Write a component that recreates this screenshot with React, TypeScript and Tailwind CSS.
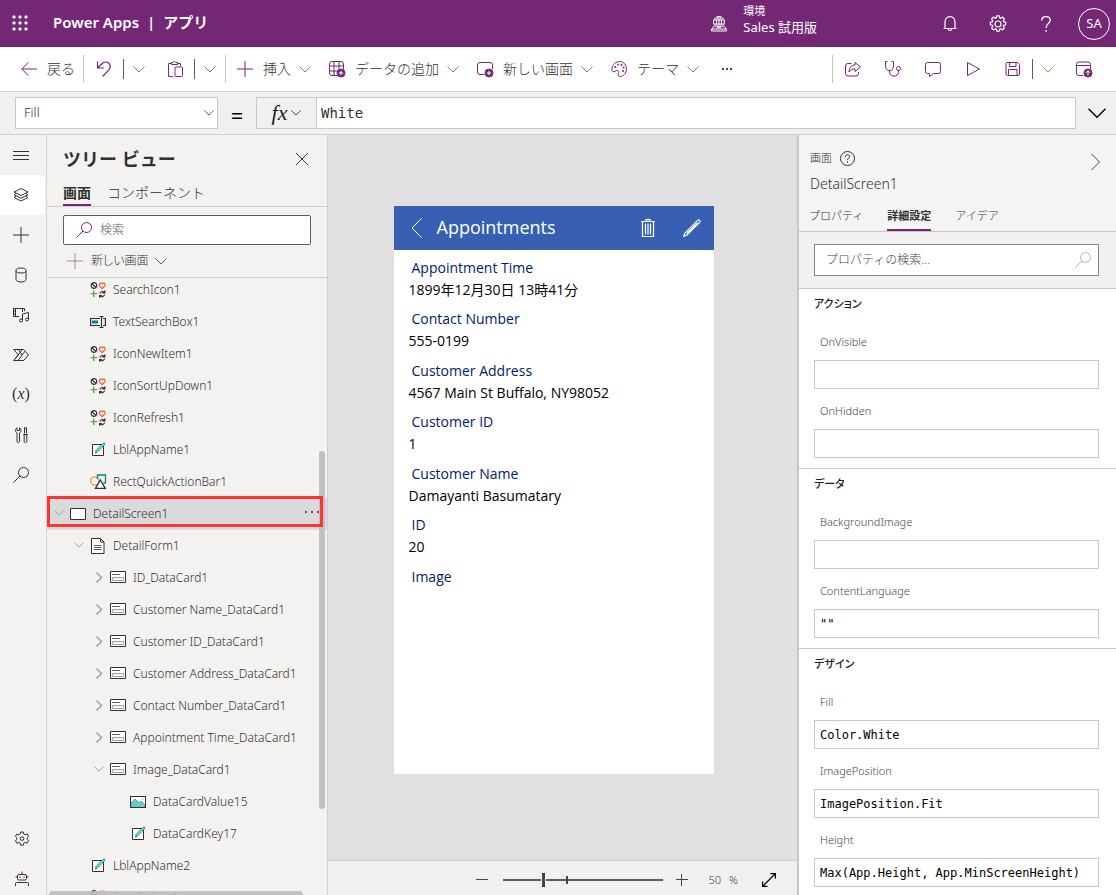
import type { ReactNode } from "react";

type IconProps = { children: ReactNode; size?: string; stroke?: number; box?: string };

function Svg({ children, size = "size-4", stroke = 1, box = "0 0 16 16" }: IconProps) {
  return (
    <svg
      viewBox={box}
      className={`${size} shrink-0 overflow-visible`}
      fill="none"
      stroke="currentColor"
      strokeWidth={stroke}
      aria-hidden="true"
    >
      {children}
    </svg>
  );
}

const ChevronDown = ({ size = "w-3 h-[7px]" }: { size?: string }) => (
  <Svg size={size} box="0 0 12 7"><path d="M.5.5 6 6 11.5.5" /></Svg>
);
const ChevronRight = () => (
  <Svg size="w-[6px] h-[11px]" box="0 0 6 11" stroke={1.2}><path d="M.5.5 5.5 5.5.5 10.5" /></Svg>
);
const Plus = () => <Svg><path d="M8 0v16M0 8h16" /></Svg>;
const Search = () => <Svg><circle cx="10.5" cy="5.5" r="5" /><path d="M7 9 .5 15.5" /></Svg>;
const Back = () => <Svg><path d="M.8 8H16M7.5 1.3.8 8l6.7 6.7" /></Svg>;
const Undo = () => (
  <Svg stroke={1.2}><path d="M1.500.5v6.500H8M1.500 7l5-4.700c1.800-1.600 4.600-1.600 6.300 0 1.900 1.800 1.900 4.700.1 6.500L6.500 15.500" /></Svg>
);
const Paste = () => (
  <Svg>
    <path d="M4.500 2.500H1.500v13H6M10.500 2.500h3V5M4.500 1.500h1.700c.2-1.300 2.400-1.300 2.600 0h1.700v2h-6z" />
    <rect x="8" y="6" width="7.500" height="9.500" rx="1" />
  </Svg>
);
const TableAdd = () => (
  <Svg>
    <path d="M8 14.500H3a2.500 2.500 0 0 1-2.500-2.500V3A2.500 2.500 0 0 1 3 .5h9A2.500 2.500 0 0 1 14.500 3v5M.5 5h14M.5 10h8M5 .5v14M10 .5V8" />
    <circle cx="12" cy="12" r="4" fill="currentColor" />
    <path d="M12 9.800v4.400M9.800 12h4.400" stroke="white" />
  </Svg>
);
const ScreenAdd = () => (
  <Svg>
    <path d="M7.500 13.500H3A2.500 2.500 0 0 1 .5 11V4A2.500 2.500 0 0 1 3 1.500h10A2.500 2.500 0 0 1 15.500 4v4" />
    <circle cx="12" cy="12" r="4" fill="currentColor" />
    <path d="M12 9.800v4.400M9.800 12h4.400" stroke="white" />
  </Svg>
);
const Palette = () => (
  <Svg>
    <path d="M1 7.500C1.500 3 5 .4 9 .6c4 .3 6.700 3.700 6.500 7.400-.2 4.300-3.300 7.500-6.200 7.500-2.200 0-2.500-1.800-1.800-3.200.6-1.400.2-2.600-1-2.800C4.300 9.300 3.600 11.500 2 10.700.8 10 .8 8.900 1 7.500z" />
    <g fill="currentColor" stroke="none">
      <circle cx="4.300" cy="6" r="1" /><circle cx="7" cy="3.600" r="1" /><circle cx="10.500" cy="3.900" r="1" />
      <circle cx="12.600" cy="6.600" r="1" /><circle cx="12" cy="10" r="1" />
    </g>
  </Svg>
);
const Share = () => (
  <Svg>
    <path d="M6.500 2.500H3A2.500 2.500 0 0 0 .5 5v7.500A2.500 2.500 0 0 0 3 15h8a2.500 2.500 0 0 0 2.500-2.500V11" />
    <path d="M10 1.500 15.500 6 10 10.500V8c-3 0-4.500 1-6 3 0-4 2-7 6-7z" strokeLinejoin="round" />
  </Svg>
);
const Checker = () => (
  <Svg>
    <path d="M2.500.5h-2v4.500c0 3 1.800 4.500 4 4.500S8.500 8 8.500 5V.5h-2M4.500 9.500v1.800c0 5.200 9 5.200 9 0V9.500" />
    <circle cx="13.500" cy="7.500" r="2" />
  </Svg>
);
const Comment = () => (
  <Svg><path d="M2.500 1.500h11a2 2 0 0 1 2 2v7a2 2 0 0 1-2 2H8.500l-4 3v-3h-2a2 2 0 0 1-2-2v-7a2 2 0 0 1 2-2z" strokeLinejoin="round" /></Svg>
);
const Play = () => <Svg><path d="M2.500 1.500 14.500 8l-12 6.500z" strokeLinejoin="round" /></Svg>;
const Save = () => (
  <Svg>
    <path d="M2 1.500h10.500l2 2v9.500a1.500 1.500 0 0 1-1.500 1.500H2.500A1.500 1.500 0 0 1 1 13V2.500a1 1 0 0 1 1-1z" />
    <path d="M4.500 1.500v4h6.500v-4M3.500 14.500v-6h8.500v6" />
  </Svg>
);
const Publish = () => (
  <Svg>
    <path d="M7.500 14.500H3A2.500 2.500 0 0 1 .5 12V3.500A2.500 2.500 0 0 1 3 1h9a2.500 2.500 0 0 1 2.500 2.500V8M.5 4.500h14" />
    <circle cx="12" cy="12" r="4" fill="currentColor" />
    <path d="M12 14.500V10M10 11.700l2-2 2 2" stroke="white" />
  </Svg>
);
const GEAR =
  "M6.700 1h2.600l.4 2 1.500.8 1.900-.8 1.500 2.300-1.400 1.500v1.600l1.400 1.500-1.500 2.300-1.900-.8-1.500.8-.4 2H6.700l-.4-2-1.500-.8-1.900.8-1.500-2.300 1.400-1.500V6.800L1.400 5.300 2.900 3l1.900.8L6.300 3z";
const Gear = () => (
  <Svg><path d={GEAR} strokeLinejoin="round" /><circle cx="8" cy="7.600" r="1.800" /></Svg>
);
const GearRound = () => (
  <Svg size="size-[18px]" box="0 0 18 18" stroke={1.2}>
    <circle cx="9" cy="9" r="3" />
    <path
      strokeLinejoin="round"
      d="m7.700.8 2.600 0 .4 2.100 1 .4 1.800-1.200 1.900 1.900-1.200 1.800.4 1 2.100.4v2.600l-2.100.4-.4 1 1.200 1.800-1.900 1.900-1.800-1.200-1 .4-.4 2.100H7.700l-.4-2.100-1-.4-1.800 1.200L2.600 13l1.200-1.800-.4-1-2.100-.4V7.200l2.100-.4.4-1L2.600 4l1.900-1.900 1.800 1.200 1-.4z"
    />
  </Svg>
);
const Bell = () => (
  <Svg stroke={1.2}><path d="M1.500 12.500h13M3 12.500V6C3 3 5 .6 8 .6S13 3 13 6v6.500M6.200 13c.3 2 3.300 2 3.600 0" /></Svg>
);
const EnvGlobe = () => (
  <Svg>
    <path d="M3.500 10.500h-1l-2 3.500v1h15v-1l-2-3.500h-1M.5 13h15" />
    <circle cx="8" cy="6" r="5.500" />
    <ellipse cx="8" cy="6" rx="2.500" ry="5.500" />
    <path d="M3 4h10M3 8h10M8 .5v11" />
  </Svg>
);
const Menu = () => <Svg><path d="M0 4.500h16M0 8.500h16M0 12.500h16" /></Svg>;
const Layers = () => (
  <Svg>
    <path d="m8 1.500 7 3.500-7 3.500L1 5z" />
    <path d="M3 6.500 1 7.700l7 3.500 7-3.500-2-1.200M3 9.300l-2 1.200L8 14l7-3.500-2-1.200" />
  </Svg>
);
const Cylinder = () => (
  <Svg><ellipse cx="8" cy="3.500" rx="5" ry="2.500" /><path d="M3 3.500v9c0 3.300 10 3.300 10 0v-9" /></Svg>
);
const Media = () => (
  <Svg>
    <path d="M6 9.500H.5v-8h11V4M2.500 1.500v8M9.500 1.500V5M.5 4h2M.5 7h2M9.500 13.500V7l6-1.500v7" />
    <circle cx="8" cy="13.500" r="1.500" /><circle cx="14" cy="12.500" r="1.500" />
  </Svg>
);
const Flow = () => (
  <Svg><path d="M.7 2.500h10L15.500 8l-4.800 5.500H.7L5.500 8zM.7 13.500 9 3M5 13.500 11.800 4.500M5.500 2.500 9 8" /></Svg>
);
const Tools = () => (
  <Svg>
    <path d="M4 .8C2 2 2 5 4 6v8.500c0 1.300 2.500 1.300 2.500 0V6c2-1 2-4 0-5.200V3.500H4zM11.500.5v6M13.500.5v6M10.300 7.500h4.400M11.200 7.500v7c0 1.300 2.600 1.300 2.600 0v-7" />
    <path d="M11.500 1h2" />
  </Svg>
);
const Robot = () => (
  <Svg>
    <path d="M8 3V.5M5 3.500h6a1.500 1.500 0 0 1 1.500 1.500v2.500A1.500 1.500 0 0 1 11 9H5a1.500 1.500 0 0 1-1.500-1.500V5A1.500 1.500 0 0 1 5 3.500zM1.500 15v-2.500a1 1 0 0 1 1-1h11a1 1 0 0 1 1 1V15M1.500 6h2M12.500 6h2" />
    <path d="M6 5.500v1.500M10 5.500v1.500" stroke="#742774" />
  </Svg>
);

const IconsGroup = () => (
  <Svg size="w-4 h-[17px]" box="0 0 16 18" stroke={1.2}>
    <g stroke="#323130">
      <circle cx="3.700" cy="3.700" r="3" /><path d="m1.600 1.600 4.200 4.200" />
      <path d="M10 12.300a3 3 0 0 1 5-1.200M15.300 9v2.500h-2.500M15 13.400a3 3 0 0 1-5 1.300M9.700 16.800v-2.500h2.500" />
    </g>
    <path d="M12.500 7 9.700 4.100C8.400 2.500 10.600-.1 12.500 1.900c1.900-2 4.100.6 2.800 2.200z" stroke="#e8552f" />
    <path d="M3.500 9v7M0 12.500h7" stroke="#2f9a3c" />
  </Svg>
);
const TextBoxIcon = () => (
  <Svg stroke={1.2}>
    <path d="M10 4.500H.6v7H10M13 4.500h2.400v7H13" stroke="#323130" />
    <path d="M2 6.500h6v3H2z" fill="#038387" stroke="none" />
    <path d="M9.500 2.500h4M9.500 13.500h4M11.500 2.500v11" stroke="#323130" />
  </Svg>
);
const LabelIcon = () => (
  <Svg>
    <path d="M2.500 2.500h11v11h-11z" stroke="#323130" fill="white" />
    <path d="m5.500 11 .8-2.800 7-7c.9-.8 2.200.5 1.400 1.400l-7 7z" stroke="#038387" fill="#b4e3e5" />
  </Svg>
);
const ShapesIcon = () => (
  <Svg stroke={1.3}>
    <circle cx="4.800" cy="7" r="4.200" stroke="#e8a33d" />
    <path d="M7.500 5V1h8v8h-2" stroke="#038387" />
    <path d="M10.300 6 5.500 14.400h9.800z" stroke="#323130" fill="white" />
  </Svg>
);
const ScreenIcon = () => (
  <Svg><path d="M.5 2.500h15v11H.5z" fill="white" stroke="#323130" /></Svg>
);
const FormIcon = () => (
  <Svg>
    <path d="M1.500.5h9l3.500 3.500v11.500H1.500z" fill="white" stroke="#323130" />
    <path d="M10.500.5V4H14" stroke="#323130" />
    <path d="M4 7.500h7.500M4 9.500h7.500M4 11.500h7.500" stroke="#605e5c" />
  </Svg>
);
const CardIcon = () => (
  <Svg>
    <path d="M.5 1.500h15v11H.5z" fill="white" stroke="#323130" />
    <path d="M2 4.500h8" stroke="#605e5c" />
    <path d="M2.500 7.500h11v3h-11z" stroke="#a19f9d" />
  </Svg>
);
const ImageIcon = () => (
  <Svg>
    <path d="M.5 2.500h15v11H.5z" fill="white" />
    <path d="M1 9l4-4 4 4 2-2 4 4v2.500H1z" fill="#69cdd0" stroke="#038387" strokeWidth=".6" />
    <path d="M.5 2.500h15v11H.5z" stroke="#323130" />
    <circle cx="12.500" cy="5.200" r=".7" fill="#e8a33d" stroke="none" />
  </Svg>
);

const jp = "font-['Noto_Sans','Noto_Sans_CJK_JP',sans-serif]";

function Divider({ tall = false, className = "" }: { tall?: boolean; className?: string }) {
  return <span className={`${tall ? "h-7 bg-[#c8c6c4]" : "h-5 bg-[#605e5c]"} w-px shrink-0 ${className}`} />;
}

function MenuButton({ icon, label, className = "" }: { icon: ReactNode; label: string; className?: string }) {
  return (
    <button type="button" className={`flex items-center whitespace-nowrap ${className}`}>
      <span className="text-[#742774]">{icon}</span>
      <span className="mr-2 ml-2.5 pb-0.5">{label}</span>
      <span className="text-[#69879a]"><ChevronDown /></span>
    </button>
  );
}

function IconButton({ label, children, className = "" }: { label: string; children: ReactNode; className?: string }) {
  return (
    <button type="button" aria-label={label} className={`flex shrink-0 items-center justify-center ${className}`}>
      {children}
    </button>
  );
}

function Header() {
  return (
    <header className="flex h-[47px] shrink-0 items-center bg-[#742774] font-normal text-white">
      <IconButton label="アプリ起動ツール" className="ml-3 pb-px">
        <svg viewBox="0 0 16 16" className="size-4" fill="currentColor" aria-hidden="true">
          {[0, 6, 12].map((y) => [0, 6, 12].map((x) => <rect key={`${x}-${y}`} x={x + 0.5} y={y + 0.5} width="3" height="3" rx="1" />))}
        </svg>
      </IconButton>
      <h1 className="ml-[25px] flex gap-2 pb-0.5 text-[15px] font-semibold whitespace-nowrap">
        <span>Power Apps</span><span>|</span><span>アプリ</span>
      </h1>
      <div className="mr-[125px] ml-auto flex items-center gap-4">
        <EnvGlobe />
        <div className="pb-2.5 whitespace-nowrap">
          <div className="text-[11px] leading-4">環境</div>
          <div className="text-[13px] leading-4">Sales 試用版</div>
        </div>
      </div>
      <IconButton label="通知" className="w-4"><Bell /></IconButton>
      <IconButton label="設定" className="ml-[31px]"><GearRound /></IconButton>
      <IconButton label="ヘルプ" className="ml-[30px] w-[18px]">
        <Svg size="w-[10px] h-4" box="0 0 10 16" stroke={1.3}>
          <path d="M.7 4.500C.7 2 2.500.7 5 .7s4.300 1.500 4.300 3.600C9.300 7.500 5 7.800 5 12M5 14v1.800" />
        </Svg>
      </IconButton>
      <button type="button" className="mr-[6px] ml-[23px] size-8 rounded-full border border-white text-[13px]">SA</button>
    </header>
  );
}

function CommandBar() {
  return (
    <div className="flex h-[45px] shrink-0 items-center border-b border-[#d2d0ce] bg-white text-[14px] text-[#323130]">
      <button type="button" className="ml-[21px] flex items-center gap-2.5 whitespace-nowrap">
        <span className="text-[#742774]"><Back /></span>
        <span className="pb-0.5">戻る</span>
      </button>
      <Divider tall className="ml-2" />
      <IconButton label="元に戻す" className="ml-3 text-[#742774]"><Undo /></IconButton>
      <Divider className="ml-[11px]" />
      <IconButton label="元に戻すオプション" className="ml-[9px] text-[#69879a]"><ChevronDown /></IconButton>
      <IconButton label="貼り付け" className="ml-[22px] text-[#742774]"><Paste /></IconButton>
      <Divider className="ml-[11px]" />
      <IconButton label="貼り付けオプション" className="ml-[9px] text-[#69879a]"><ChevronDown /></IconButton>
      <Divider tall className="ml-[9px]" />
      <MenuButton className="ml-[11px]" icon={<Plus />} label="挿入" />
      <MenuButton className="ml-[18px]" icon={<TableAdd />} label="データの追加" />
      <MenuButton className="ml-[18px]" icon={<ScreenAdd />} label="新しい画面" />
      <MenuButton className="ml-[18px]" icon={<Palette />} label="テーマ" />
      <IconButton label="その他" className="ml-[22px] text-[#742774]">
        <Svg size="w-3 h-1" box="0 0 12 4"><path d="M1 2h2M5 2h2M9 2h2" strokeWidth="2" /></Svg>
      </IconButton>
      <div className="mr-6 ml-auto flex items-center text-[#742774]">
        <Divider tall />
        <IconButton label="共有" className="ml-3"><Share /></IconButton>
        <IconButton label="アプリ チェッカー" className="ml-6"><Checker /></IconButton>
        <IconButton label="コメント" className="ml-6"><Comment /></IconButton>
        <IconButton label="プレビュー" className="ml-6"><Play /></IconButton>
        <IconButton label="保存" className="ml-6"><Save /></IconButton>
        <Divider className="ml-[11px]" />
        <IconButton label="保存オプション" className="ml-[9px] text-[#a5894f]"><ChevronDown /></IconButton>
        <IconButton label="公開" className="ml-[22px]"><Publish /></IconButton>
      </div>
    </div>
  );
}

function FormulaBar() {
  return (
    <div className="flex h-[43px] shrink-0 items-center border-b border-[#d2d0ce] bg-[#f0f0f0]">
      <div className="relative ml-[15px] w-[203px] shrink-0">
        <select aria-label="プロパティ" className="h-8 w-full appearance-none border border-[#c8c8c8] bg-white px-2 text-[13px] text-[#323130]">
          <option>Fill</option>
        </select>
        <span className="pointer-events-none absolute inset-y-0 right-1 flex items-center text-[#323130]">
          <ChevronDown size="w-2.5 h-1.5" />
        </span>
      </div>
      <span className="w-[38px] shrink-0 pt-1 text-center text-[22px] leading-5 font-normal text-black">=</span>
      <button type="button" aria-label="数式" className="flex h-8 w-[60px] shrink-0 items-center justify-center gap-1 border border-r-0 border-[#c8c8c8] text-[#201f1e]">
        <span className="font-['Liberation_Serif',serif] text-[22px] leading-5 font-normal italic">fx</span>
        <ChevronDown size="w-2.5 h-1.5" />
      </button>
      <input
        aria-label="数式バー"
        defaultValue="White"
        className="h-8 min-w-0 flex-1 border border-[#c8c8c8] bg-white px-1 font-['DejaVu_Sans_Mono','Liberation_Mono',monospace] text-[14px] text-[#323130]"
      />
      <IconButton label="数式バーを展開" className="w-10 pl-px text-black">
        <Svg size="w-[18px] h-2.5" box="0 0 18 10" stroke={1.4}><path d="m.5.7 8.500 8.500L17.500.7" /></Svg>
      </IconButton>
    </div>
  );
}

const railItems: { label: string; icon: ReactNode; active?: boolean }[] = [
  { label: "メニュー", icon: <Menu /> },
  { label: "ツリー ビュー", icon: <Layers />, active: true },
  { label: "挿入", icon: <Plus /> },
  { label: "データ", icon: <Cylinder /> },
  { label: "メディア", icon: <Media /> },
  { label: "Power Automate", icon: <Flow /> },
  { label: "変数", icon: <span className="pb-0.5 font-['Liberation_Serif',serif] text-[16px] leading-4">(<i>x</i>)</span> },
  { label: "詳細ツール", icon: <Tools /> },
  { label: "検索", icon: <Search /> },
];

function Rail() {
  return (
    <nav className="flex w-[47px] shrink-0 flex-col border-r border-[#d8d6d4] bg-[#f3f2f1] text-[#323130]">
      {railItems.map((item) => (
        <IconButton key={item.label} label={item.label} className={`mr-px h-10 pr-[3px] ${item.active ? "rounded-r-sm bg-white" : ""}`}>
          {item.icon}
        </IconButton>
      ))}
      <div className="mt-auto flex flex-col gap-1">
        <IconButton label="設定" className="h-10 pr-0.5"><Gear /></IconButton>
        <IconButton label="仮想エージェント" className="h-8 pr-0.5"><Robot /></IconButton>
      </div>
    </nav>
  );
}

type Node = { level: 0 | 1 | 2 | 3; icon: ReactNode; name: string; open?: boolean; selected?: boolean };

const nodes: Node[] = [
  { level: 1, icon: <IconsGroup />, name: "SearchIcon1" },
  { level: 1, icon: <TextBoxIcon />, name: "TextSearchBox1" },
  { level: 1, icon: <IconsGroup />, name: "IconNewItem1" },
  { level: 1, icon: <IconsGroup />, name: "IconSortUpDown1" },
  { level: 1, icon: <IconsGroup />, name: "IconRefresh1" },
  { level: 1, icon: <LabelIcon />, name: "LblAppName1" },
  { level: 1, icon: <ShapesIcon />, name: "RectQuickActionBar1" },
  { level: 0, icon: <ScreenIcon />, name: "DetailScreen1", open: true, selected: true },
  { level: 1, icon: <FormIcon />, name: "DetailForm1", open: true },
  { level: 2, icon: <CardIcon />, name: "ID_DataCard1", open: false },
  { level: 2, icon: <CardIcon />, name: "Customer Name_DataCard1", open: false },
  { level: 2, icon: <CardIcon />, name: "Customer ID_DataCard1", open: false },
  { level: 2, icon: <CardIcon />, name: "Customer Address_DataCard1", open: false },
  { level: 2, icon: <CardIcon />, name: "Contact Number_DataCard1", open: false },
  { level: 2, icon: <CardIcon />, name: "Appointment Time_DataCard1", open: false },
  { level: 2, icon: <CardIcon />, name: "Image_DataCard1", open: true },
  { level: 3, icon: <ImageIcon />, name: "DataCardValue15" },
  { level: 3, icon: <LabelIcon />, name: "DataCardKey17" },
  { level: 1, icon: <LabelIcon />, name: "LblAppName2" },
  { level: 1, icon: <IconsGroup />, name: "IconDelete1" },
];

const indent = ["pl-1", "pl-6", "pl-11", "pl-16"];

function TreeRow({ node }: { node: Node }) {
  return (
    <li className={`relative flex h-8 items-center ${indent[node.level]} ${node.selected ? "bg-[#dadada]" : ""}`}>
      <span className="flex w-[19px] shrink-0 justify-center pr-[3px] text-[#979593]">
        {node.open !== undefined && (
          <IconButton label={node.open ? "折りたたむ" : "展開"} className="pb-0.5">
            {node.open ? <ChevronDown size="w-2.5 h-1.5" /> : <ChevronRight />}
          </IconButton>
        )}
      </span>
      {node.icon}
      <span className="ml-[7px] whitespace-nowrap">{node.name}</span>
      {node.selected && (
        <>
          <IconButton label="その他の操作" className="mr-[7px] ml-auto pb-1 text-[#323130]">
            <Svg size="w-4 h-1" box="0 0 16 4"><path d="M1 2h2M7 2h2M13 2h2" strokeWidth="1.500" /></Svg>
          </IconButton>
          <span className="pointer-events-none absolute -top-0.5 right-1 bottom-[3px] left-0 z-10 border-3 border-[#fc3433]" />
        </>
      )}
    </li>
  );
}

function TreeView() {
  return (
    <aside className="flex w-[281px] shrink-0 flex-col border-r border-[#d2d0ce] bg-[#f3f2f1] text-[#323130]">
      <div className="flex h-12 shrink-0 items-center justify-between pr-[19px] pl-4">
        <h2 className="text-[18px] font-semibold">ツリー ビュー</h2>
        <IconButton label="閉じる">
          <Svg size="size-3" box="0 0 12 12"><path d="m0 0 12 12M12 0 0 12" /></Svg>
        </IconButton>
      </div>
      <div role="tablist" className="flex h-6 shrink-0 gap-4 border-b border-[#d2d0ce] pl-4 text-[14px] leading-5">
        <button type="button" role="tab" aria-selected="true" className="border-b-2 border-[#742774] pb-0.5 font-semibold">画面</button>
        <button type="button" role="tab" aria-selected="false" className="border-b-2 border-transparent pb-0.5">コンポーネント</button>
      </div>
      <div className="mx-4 mt-2 flex h-[30px] shrink-0 items-center gap-2 rounded-xs border border-[#605e5c] bg-white pl-3">
        <span className="text-[#742774]"><Search /></span>
        <input aria-label="ツリーの検索" placeholder="検索" className="min-w-0 flex-1 text-[12px] placeholder:text-[#605e5c] focus:outline-none" />
      </div>
      <button type="button" className="flex h-[33px] shrink-0 items-center border-b border-[#d2d0ce] pl-5 text-[12px]">
        <span className="text-[#b07cb0]"><Plus /></span>
        <span className="mr-[7px] ml-2 [font-feature-settings:'palt']">新しい画面</span>
        <span className="text-[#605e5c]"><ChevronDown /></span>
      </button>
      <div className="relative min-h-0 flex-1 overflow-hidden">
        <ul className="-mt-1 text-[12px] text-[#323130]">
          {nodes.map((node) => <TreeRow key={node.name} node={node} />)}
        </ul>
        <span className="absolute top-[28%] right-[2px] h-[58%] w-1.5 rounded-full bg-[#bdbdbc]/90" />
        <span className="absolute bottom-0 left-0.5 h-1 w-[254px] rounded-t-sm bg-[#bdbdbc]/90" />
      </div>
    </aside>
  );
}

const cards: [string, string][] = [
  ["Appointment Time", "1899年12月30日 13時41分"],
  ["Contact Number", "555-0199"],
  ["Customer Address", "4567 Main St Buffalo, NY98052"],
  ["Customer ID", "1"],
  ["Customer Name", "Damayanti Basumatary"],
  ["ID", "20"],
  ["Image", ""],
];

function Canvas() {
  return (
    <main className="flex min-w-0 flex-1 flex-col bg-[#e0e0e0]">
      <div className="flex min-h-0 flex-1 items-center justify-center pr-[18px] pb-4">
        <section className="h-[568px] w-80 shrink-0 bg-white font-['Open_Sans','Noto_Sans_CJK_JP',sans-serif] font-normal">
          <div className="flex h-11 items-center bg-[#3860b2] px-4 text-white">
            <IconButton label="前へ">
              <Svg size="w-3 h-5" box="0 0 12 20"><path d="M11.500.5 2 10l9.500 9.500" /></Svg>
            </IconButton>
            <h3 className="ml-[15px] text-[18px] font-medium">Appointments</h3>
            <IconButton label="削除" className="mr-7 ml-auto">
              <Svg size="w-[14px] h-[18px]" box="0 0 14 18">
                <path d="M0 2.500h14M5 2.500V.7h4v1.800M1.500 2.500v15h11v-15M4.500 4.500v11M7 4.500v11M9.500 4.500v11" strokeWidth="1.200" />
              </Svg>
            </IconButton>
            <IconButton label="編集" className="-mr-[3px]">
              <Svg size="size-[18px]" box="0 0 18 18" stroke={1.2}>
                <path d="M.8 17.200 2 14 14.700 1.300c1.200-1.200 3.200.8 2 2L4 16zM4 14.500 14.500 4" />
              </Svg>
            </IconButton>
          </div>
          <dl className="grid h-[361px] auto-rows-fr pl-[15px] text-[14px]">
            {cards.map(([label, value]) => (
              <div key={label} className="pt-2">
                <dt className="pl-[3px] leading-5 text-[#001b66]">{label}</dt>
                <dd className="leading-6 text-black">{value}</dd>
              </div>
            ))}
          </dl>
        </section>
      </div>
      <footer className="flex h-[35px] shrink-0 items-center justify-end border-t border-[#d2d0ce] bg-[#f0f0f0] pt-1 text-[#484644]">
        <IconButton label="縮小" className="w-3"><Svg size="size-3" box="0 0 12 12"><path d="M0 5.500h12" /></Svg></IconButton>
        <div className="relative mr-[13px] ml-[15px] flex w-40 items-center">
          <input
            type="range"
            aria-label="ズーム"
            min={0}
            max={100}
            defaultValue={25}
            className="h-4 w-full appearance-none bg-transparent [&::-webkit-slider-runnable-track]:h-0.5 [&::-webkit-slider-runnable-track]:bg-[#605e5c] [&::-webkit-slider-thumb]:-mt-[6px] [&::-webkit-slider-thumb]:h-[14px] [&::-webkit-slider-thumb]:w-[5px] [&::-webkit-slider-thumb]:appearance-none [&::-webkit-slider-thumb]:border [&::-webkit-slider-thumb]:border-y-0 [&::-webkit-slider-thumb]:border-[#f0f0f0] [&::-webkit-slider-thumb]:bg-[#484644]"
          />
          <span className="pointer-events-none absolute left-[63px] h-2 w-0.5 bg-[#484644]" />
        </div>
        <IconButton label="拡大" className="w-3"><Svg size="size-3" box="0 0 12 12"><path d="M0 5.500h12M5.500 0v12" /></Svg></IconButton>
        <span className="ml-[21px] text-[11px] text-[#484644]">50</span>
        <span className="ml-2 text-[11px] text-[#484644]">%</span>
        <IconButton label="ウィンドウに合わせる" className="mr-[21px] ml-6 text-black">
          <Svg size="size-[14px]" box="0 0 14 14" stroke={1.2}><path d="m1 13 12-12M8.500.6h4.900v4.900M.6 8.500v4.900h4.900" /></Svg>
        </IconButton>
      </footer>
    </main>
  );
}

const groups: { title: string; fields: [string, string][] }[] = [
  { title: "アクション", fields: [["OnVisible", ""], ["OnHidden", ""]] },
  { title: "データ", fields: [["BackgroundImage", ""], ["ContentLanguage", '""']] },
  { title: "デザイン", fields: [["Fill", "Color.White"], ["ImagePosition", "ImagePosition.Fit"], ["Height", "Max(App.Height, App.MinScreenHeight)"]] },
];

function Properties() {
  return (
    <aside className="flex w-[319px] shrink-0 flex-col overflow-hidden border-l-2 border-[#c8c8c8] bg-white text-[#323130]">
      <div className="flex h-[97px] shrink-0 flex-col border-b border-[#c8c8c8] bg-[#f4f4f4]">
        <div className="flex items-start justify-between pt-[14px] pr-4 pl-[11px]">
          <div>
            <div className="flex h-[18px] items-center gap-2 text-[11px]">
              画面
              <IconButton label="ヘルプ">
                <Svg size="size-[15px]" box="0 0 15 15">
                  <circle cx="7.500" cy="7.500" r="7" />
                  <path d="M5.300 6c0-3 4.400-3 4.400-.3C9.700 7.200 7.500 7 7.500 9M7.500 10v1.500" />
                </Svg>
              </IconButton>
            </div>
            <div className="mt-[7px] text-[14px] leading-5">DetailScreen1</div>
          </div>
          <IconButton label="パネルを折りたたむ" className="mt-[5px] text-[#484644]">
            <Svg size="w-[9px] h-4" box="0 0 9 16"><path d="M.5 0 8.500 8l-8 8" /></Svg>
          </IconButton>
        </div>
        <div role="tablist" className="mt-auto flex h-6 gap-6 pl-2.5 text-[11px]">
          <button type="button" role="tab" aria-selected="false" className="border-b-2 border-transparent pb-1">プロパティ</button>
          <button type="button" role="tab" aria-selected="true" className="border-b-2 border-[#742774] pb-1 font-semibold">詳細設定</button>
          <button type="button" role="tab" aria-selected="false" className="border-b-2 border-transparent pb-1">アイデア</button>
        </div>
      </div>
      <div className="shrink-0 bg-[#f1f1f1] pt-3 pr-[17px] pb-3 pl-[15px]">
        <div className="flex h-8 items-center border border-[#8a8886] bg-white pr-[7px] pl-[11px]">
          <input aria-label="プロパティの検索" placeholder="プロパティの検索..." className="min-w-0 flex-1 text-[12px] placeholder:text-[#484644] focus:outline-none" />
          <span className="text-[#b8b6b4]"><Search /></span>
        </div>
      </div>
      <div className="min-h-0 flex-1 overflow-hidden">
        {groups.map((group) => (
          <section key={group.title} className="border-t border-[#c8c8c8] pr-[17px] pb-2.5 pl-[15px]">
            <h4 className="flex h-[31px] items-center text-[11px] font-medium text-[#201f1e] [font-feature-settings:'palt']">{group.title}</h4>
            {group.fields.map(([name, value]) => (
              <label key={name} className="block pt-2">
                <span className="mb-1 flex h-7 items-center pl-1.5 text-[11px] text-[#484644]">{name}</span>
                <input
                  defaultValue={value}
                  className="block h-[29px] w-full border border-[#c8c8c8] bg-white px-[5px] font-['DejaVu_Sans_Mono','Liberation_Mono',monospace] text-[12px] text-black"
                />
              </label>
            ))}
          </section>
        ))}
      </div>
    </aside>
  );
}

export default function App() {
  return (
    <div className={`flex h-screen flex-col overflow-hidden font-light ${jp}`}>
      <Header />
      <CommandBar />
      <FormulaBar />
      <div className="flex min-h-0 flex-1">
        <Rail />
        <TreeView />
        <Canvas />
        <Properties />
      </div>
    </div>
  );
}
